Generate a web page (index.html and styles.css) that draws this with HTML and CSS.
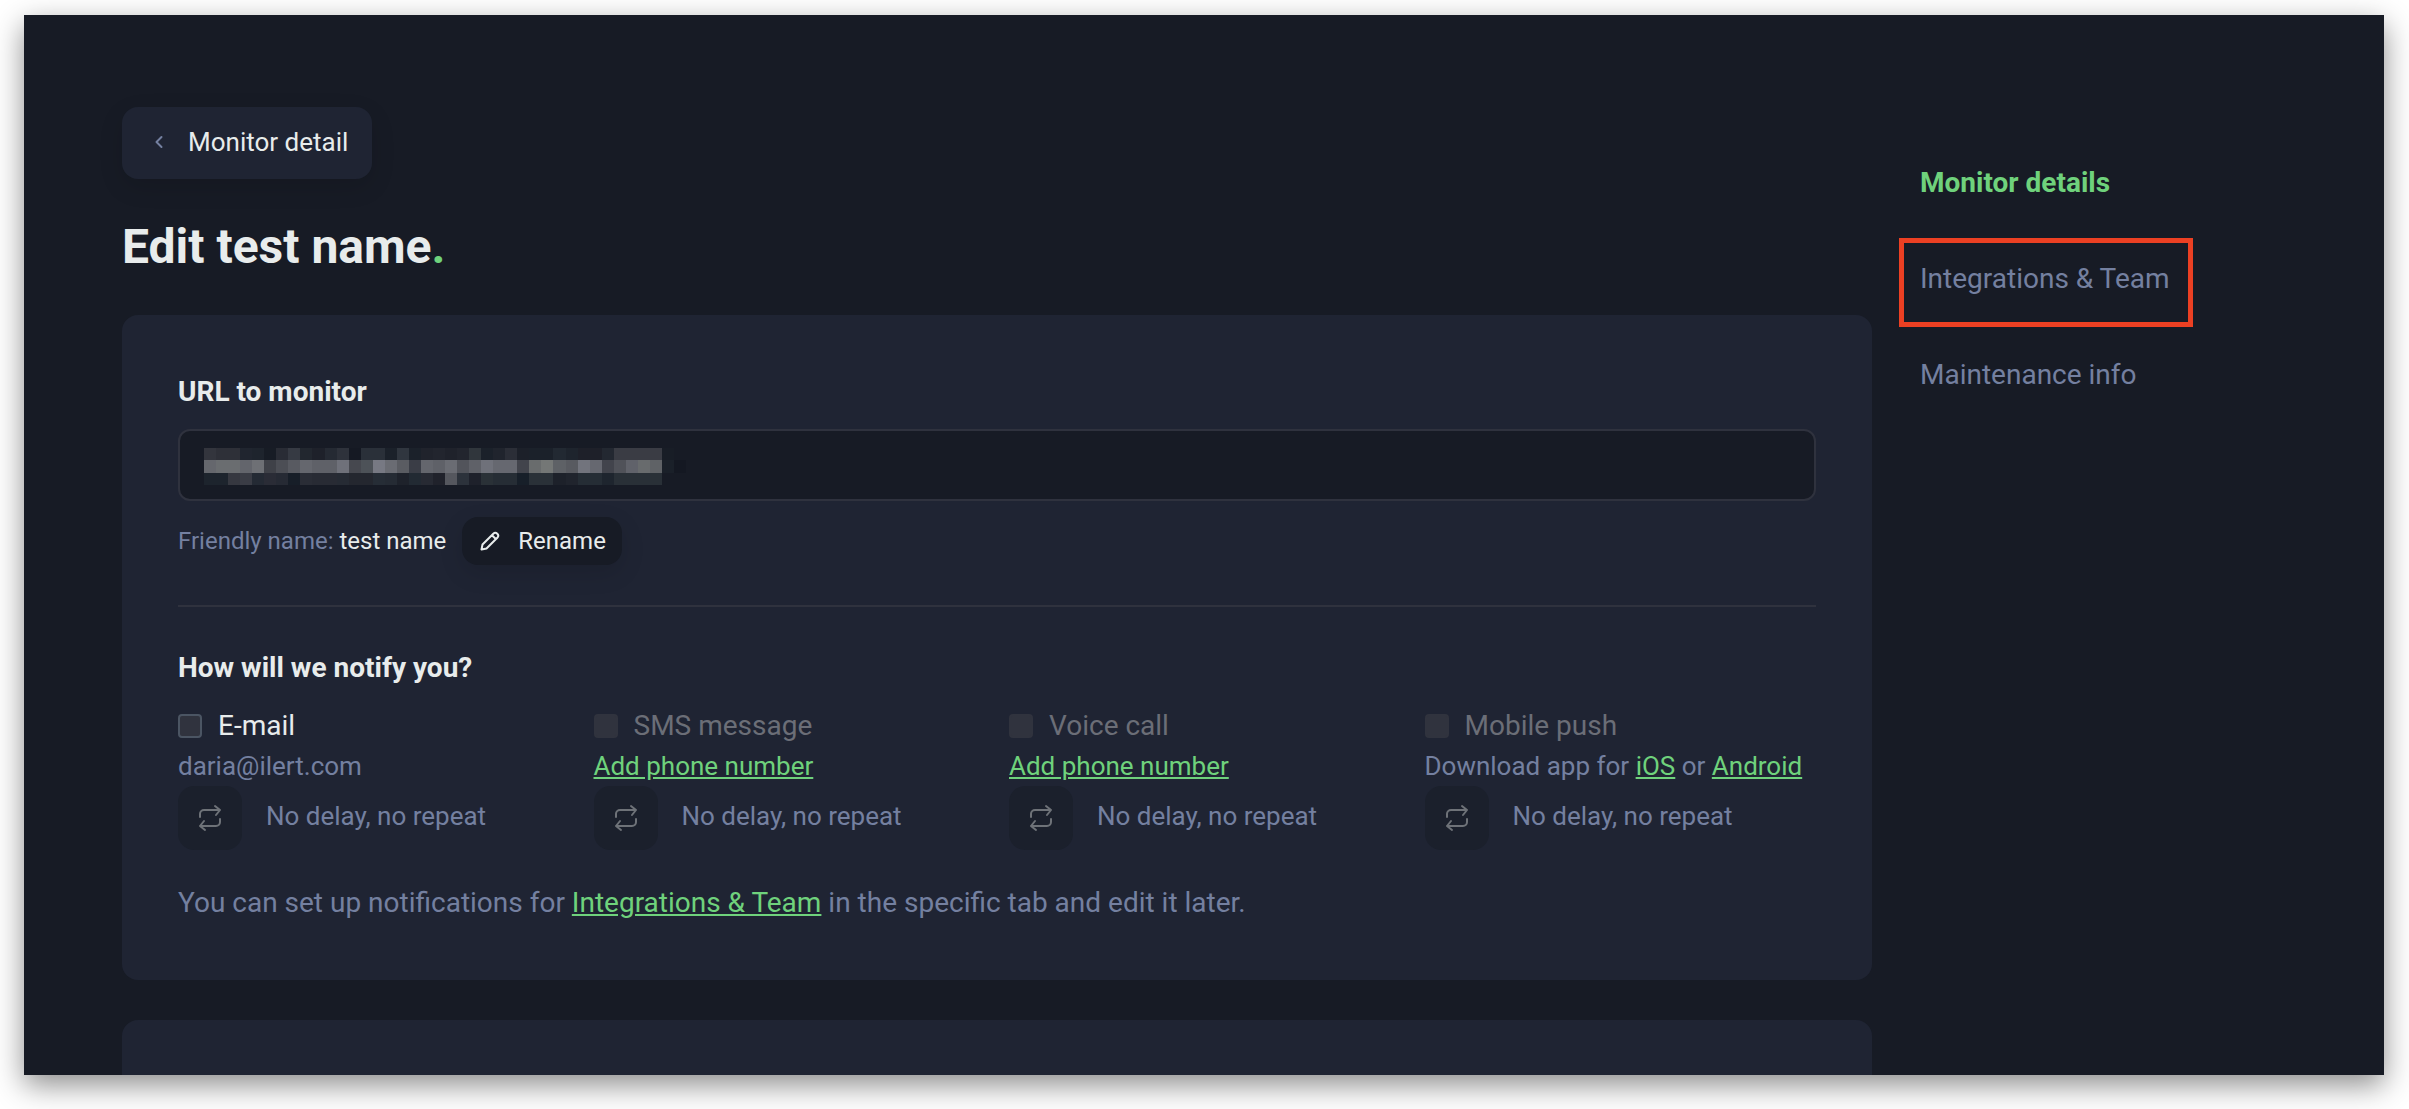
FILE: index.html
```html
<!DOCTYPE html>
<html lang="en">
<head>
<meta charset="utf-8">
<title>Edit test name</title>
<link rel="stylesheet" href="styles.css">
</head>
<body>
<svg class="sprite" aria-hidden="true">
  <symbol id="repeat" viewBox="0 0 24 28">
    <path d="M2 13V10a4 4 0 0 1 4-4H22M17 2l5 4-4 5M22 15v3a4 4 0 0 1-4 4H2M7 26l-5-4 4-5"/>
  </symbol>
</svg>
<div class="window">
  <main class="main">
    <button class="back" type="button">
      <svg class="chevron" viewBox="0 0 10 14" aria-hidden="true"><path d="M7.500 2L2.500 7l5 5"/></svg>
      Monitor detail
    </button>
    <h1 class="title">Edit test name<span class="dot">.</span></h1>

    <section class="card">
      <label class="heading" for="url">URL to monitor</label>
      <div class="url">
        <input class="url-input" id="url" type="text">
        <svg class="mosaic" viewBox="0 0 40 3" preserveAspectRatio="none" aria-hidden="true"></svg>
      </div>
      <div class="friendly">
        <p class="friendly-text">Friendly name: <span class="friendly-name">test name</span></p>
        <button class="rename" type="button">
          <svg class="pencil" viewBox="0 0 20 20" aria-hidden="true"><path d="M1.500 18.500l1-5L13.300 2.700a2.500 2.500 0 0 1 4 4L6.500 17.500zM12 4.200l3.800 3.800"/></svg>
          Rename
        </button>
      </div>
      <hr class="divider">
      <h2 class="heading">How will we notify you?</h2>
      <div class="channels">
        <div class="channel">
          <label class="check"><input class="box" type="checkbox">E-mail</label>
          <p class="note">daria@ilert.com</p>
          <div class="delay"><button class="repeat" type="button" aria-label="Repeat"><svg class="repeat-icon"><use href="#repeat"/></svg></button><span class="delay-text">No delay, no repeat</span></div>
        </div>
        <div class="channel">
          <label class="check disabled"><input class="box" type="checkbox" disabled>SMS message</label>
          <p class="note"><a class="link" href="#phone">Add phone number</a></p>
          <div class="delay"><button class="repeat" type="button" aria-label="Repeat"><svg class="repeat-icon"><use href="#repeat"/></svg></button><span class="delay-text">No delay, no repeat</span></div>
        </div>
        <div class="channel">
          <label class="check disabled"><input class="box" type="checkbox" disabled>Voice call</label>
          <p class="note"><a class="link" href="#phone">Add phone number</a></p>
          <div class="delay"><button class="repeat" type="button" aria-label="Repeat"><svg class="repeat-icon"><use href="#repeat"/></svg></button><span class="delay-text">No delay, no repeat</span></div>
        </div>
        <div class="channel">
          <label class="check disabled"><input class="box" type="checkbox" disabled>Mobile push</label>
          <p class="note">Download app for <a class="link" href="#ios">iOS</a> or <a class="link" href="#android">Android</a></p>
          <div class="delay"><button class="repeat" type="button" aria-label="Repeat"><svg class="repeat-icon"><use href="#repeat"/></svg></button><span class="delay-text">No delay, no repeat</span></div>
        </div>
      </div>
      <p class="hint">You can set up notifications for <a class="link" href="#integrations">Integrations &amp; Team</a> in the specific tab and edit it later.</p>
    </section>

    <section class="card next"></section>
  </main>

  <nav class="tabs">
    <a class="tab active" href="#details">Monitor details</a>
    <a class="tab marked" href="#integrations">Integrations &amp; Team</a>
    <a class="tab" href="#maintenance">Maintenance info</a>
  </nav>
</div>
<script src="script.js"></script>
</body>
</html>
```
FILE: styles.css
```css
* { box-sizing: border-box; }

body {
  margin: 0;
  padding: 15px 25px 34px 24px;
  height: 100vh;
  overflow: hidden;
  background: #fff;
  color: #e8ecec;
  font-family: Roboto, "Liberation Sans", sans-serif;
  font-size: 28px;
  line-height: 40px;
}

h1, h2, p { margin: 0; }

button, input { font: inherit; color: inherit; margin: 0; }

button { border: 0; cursor: pointer; }

svg { fill: none; stroke: currentColor; stroke-width: 2; stroke-linecap: round; stroke-linejoin: round; }

.sprite { position: absolute; width: 0; height: 0; }

.window {
  display: grid;
  grid-template-columns: minmax(0, 1fr) 464px;
  column-gap: 48px;
  height: 100%;
  padding: 92px 0 0 98px;
  overflow: hidden;
  background: #171b25;
  box-shadow: 0 10px 28px rgba(0, 0, 0, .45);
}

.back {
  display: flex;
  align-items: center;
  gap: 24px;
  height: 72px;
  padding: 0 24px 2px 32px;
  border-radius: 16px;
  background: #1f2433;
  box-shadow: 0 8px 24px rgba(0, 0, 0, .12);
  font-size: 26px;
}

.chevron { width: 10px; height: 14px; color: #7480a0; }

.title {
  margin: 40px 0;
  font-size: 48px;
  line-height: 56px;
  font-weight: 700;
}

.dot { color: #6fd27c; }

.card {
  padding: 56px;
  border-radius: 16px;
  background: #1f2433;
}

.next { height: 400px; margin-top: 40px; }

.heading {
  display: block;
  margin-bottom: 16px;
  font-size: 28px;
  line-height: 42px;
  font-weight: 700;
}

.url { position: relative; }

.url-input {
  display: block;
  width: 100%;
  height: 72px;
  padding: 0 24px;
  border: 2px solid #2f323e;
  border-radius: 12px;
  outline: 0;
  background: #171b25;
}

.mosaic {
  position: absolute;
  left: 26px;
  top: 19px;
  width: 482px;
  height: 37px;
  stroke: none;
}

.friendly {
  display: flex;
  align-items: center;
  gap: 16px;
  margin: 16px 0 40px;
  font-size: 24px;
}

.friendly-text { color: #7480a0; }

.friendly-name { color: #e8ecec; }

.rename {
  display: flex;
  align-items: center;
  gap: 18px;
  height: 48px;
  padding: 0 16px 0 18px;
  border-radius: 16px;
  background: #171b25;
  box-shadow: 0 8px 24px rgba(0, 0, 0, .12);
}

.pencil { width: 20px; height: 20px; }

.divider {
  height: 2px;
  margin: 0 0 40px;
  border: 0;
  background: #2f323e;
}

.channels {
  display: grid;
  grid-template-columns: repeat(4, minmax(0, 1fr));
  column-gap: 24px;
}

.check {
  display: flex;
  align-items: center;
  gap: 16px;
  line-height: 42px;
}

.box {
  appearance: none;
  width: 24px;
  height: 24px;
  border: 2px solid #4b5563;
  border-radius: 4px;
  background: #30333e;
}

.disabled { color: #6b6e77; }

.disabled .box { border-color: #30333e; }

.note {
  color: #7480a0;
  font-size: 26px;
  line-height: 39px;
  white-space: nowrap;
}

.link { color: #6fd27c; }

.delay {
  display: flex;
  gap: 24px;
  color: #7480a0;
  font-size: 26px;
}

.repeat {
  display: grid;
  place-items: center;
  width: 64px;
  height: 64px;
  padding: 0;
  border-radius: 16px;
  background: #1b202c;
  color: #6e7278;
}

.repeat-icon { width: 24px; height: 28px; }

.delay-text { line-height: 60px; }

.hint {
  margin-top: 32px;
  color: #7480a0;
  line-height: 42px;
}

.tabs {
  display: flex;
  flex-direction: column;
  align-items: flex-start;
  gap: 56px;
  padding-top: 56px;
}

.tab { position: relative; color: #7480a0; text-decoration: none; }

.active { color: #6fd27c; font-weight: 700; }

.marked::after {
  content: "";
  position: absolute;
  inset: -21px -23px -28px -21px;
  border: 5px solid #ec4023;
}
```
FILE: script.js
```js
// Pixelated stand-in for the hidden address: one colour per cell, three rows.
const rows = [
  "33353d 2e3038 2e3038 20252f 1e242d 171c25 292c35 363a43 22272f 1e212a 252a33 2e323b 151923 2a3039 2a3039 1b212a 30363f 1b212a 20232c 22252e 1f222b 22252e 30363c 1b212a 20242d 2b2e37 1c2029 1b212a 1b212a 222932 1e242d 1e2029 1e2029 232831 3a3c44 3a3c44 3a3c44 3a3c44 181d26 171b25",
  "65676d 6a6d70 6a6d70 63656c 6e7075 3f4148 4c4e55 585a61 65676e 5f6168 5f6168 6f717a 46484f 4d5258 777983 6a6c73 5a5c62 3a3d46 64666d 5f6168 6a6c73 52545b 5f6168 6f717a 666870 666870 42444c 696c6d 747776 5e6166 585a60 72747d 666870 42444c 505259 60626a 686b6d 5f6266 1a2029 141822",
  "1d242d 1d242d 363840 3a3c45 242a34 2a2c36 262a34 171e28 2a2d36 282b34 282b34 262b34 24272f 24272f 262d36 252b34 1e222b 222a33 272a33 20222b 55575e 2c323b 1e212b 2a3137 262d35 262d35 171f29 2a3138 2a3138 1d212a 20242d 252d35 252d35 1e252e 293037 293037 293037 293037 171b25 171b25"
];
const mosaic = document.querySelector(".mosaic");
mosaic.setAttribute("shape-rendering", "crispEdges");
rows.forEach((row, y) => row.split(" ").forEach((color, x) => {
  const cell = document.createElementNS("http://www.w3.org/2000/svg", "rect");
  cell.setAttribute("x", x);
  cell.setAttribute("y", y);
  cell.setAttribute("width", 1);
  cell.setAttribute("height", 1);
  cell.setAttribute("fill", "#" + color);
  mosaic.append(cell);
}));
```
